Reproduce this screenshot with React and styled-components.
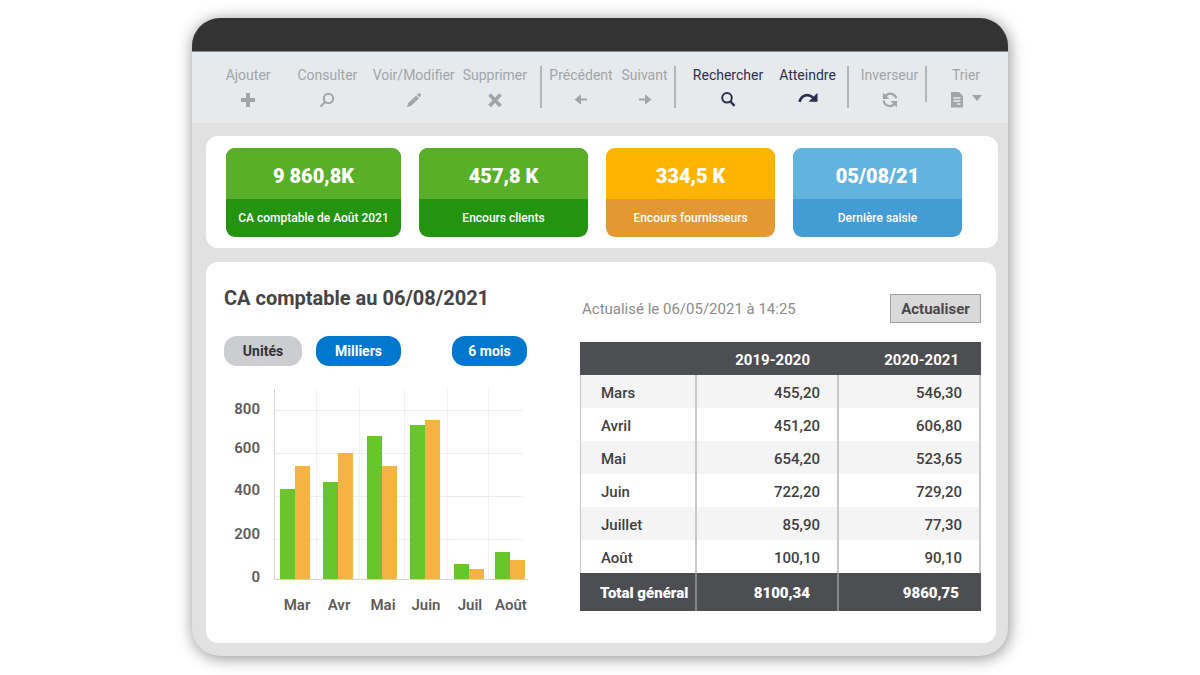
import React, { useState } from 'react'
import styled, { createGlobalStyle } from 'styled-components'

const kpis = [
    { value: '9 860,8K', label: 'CA comptable de Août 2021', top: '#5aaf28', bottom: '#229410' },
    { value: '457,8 K', label: 'Encours clients', top: '#5aaf28', bottom: '#229410' },
    { value: '334,5 K', label: 'Encours fournisseurs', top: '#ffb400', bottom: '#e49833' },
    { value: '05/08/21', label: 'Dernière saisie', top: '#62b4df', bottom: '#439cd4' },
]

const rows = [
    ['Mars', '455,20', '546,30'],
    ['Avril', '451,20', '606,80'],
    ['Mai', '654,20', '523,65'],
    ['Juin', '722,20', '729,20'],
    ['Juillet', '85,90', '77,30'],
    ['Août', '100,10', '90,10'],
]

// x is the left edge of the pair, green and orange are the bar heights
const bars = [
    { month: 'Mar', x: 56, green: 90, orange: 113, label: 73 },
    { month: 'Avr', x: 99, green: 97, orange: 126, label: 115 },
    { month: 'Mai', x: 143, green: 143, orange: 113, label: 159 },
    { month: 'Juin', x: 186, green: 154, orange: 159, label: 202 },
    { month: 'Juil', x: 230, green: 15, orange: 10, label: 246 },
    { month: 'Août', x: 271, green: 27, orange: 19, label: 287 },
]

const ticks = [
    { value: 800, y: 21 },
    { value: 600, y: 60 },
    { value: 400, y: 102 },
    { value: 200, y: 146 },
    { value: 0, y: 189 },
]

const PlusIcon = () => (
    <Icon viewBox="0 0 16 16"><path d="M6 1h4v5h5v4h-5v5H6v-5H1V6h5z" fill="currentColor" /></Icon>
)

const LoupeIcon = () => (
    <Icon viewBox="0 0 16 16">
        <circle cx="9.5" cy="6.5" r="4.7" fill="none" stroke="currentColor" strokeWidth="2" />
        <path d="M6 10l-4.5 4.5" stroke="currentColor" strokeWidth="2" />
    </Icon>
)

const PencilIcon = () => (
    <Icon viewBox="0 0 16 16">
        <path d="M1 15l1-3.8 8.2-7.6 2.8 2.8-8.2 7.6zM11 2.8l1.5-1.4c.4-.4 1-.4 1.4 0l.9.9c.4.4.4 1 0 1.4l-1.3 1.5z" fill="currentColor" />
    </Icon>
)

const CrossIcon = () => (
    <Icon viewBox="0 0 16 16"><path d="M2.5 2.5l11 11.5M13.5 2.5l-11 11.5" stroke="currentColor" strokeWidth="3.6" /></Icon>
)

const LeftIcon = () => (
    <Icon viewBox="0 0 16 16"><path d="M1.5 7.5L8 2.2v4.3h6v2H8v4.3z" fill="currentColor" /></Icon>
)

const RightIcon = () => (
    <Icon viewBox="0 0 16 16"><path d="M14.5 7.5L8 2.2v4.3H2v2h6v4.3z" fill="currentColor" /></Icon>
)

const SearchIcon = () => (
    <Icon viewBox="0 0 16 16">
        <circle cx="7" cy="5.8" r="4.8" fill="none" stroke="currentColor" strokeWidth="2" />
        <path d="M10.3 9.3l4.2 4.6" stroke="currentColor" strokeWidth="2.4" />
    </Icon>
)

const JumpIcon = () => (
    <Icon viewBox="0 0 20 16" $width={20}>
        <path d="M1.5 9.8C3.5 3.5 9.5 1 15 5.5" fill="none" stroke="currentColor" strokeWidth="2.6" />
        <path d="M19.5.8v9h-9z" fill="currentColor" />
    </Icon>
)

const SwapIcon = () => (
    <Icon viewBox="0 0 16 16">
        <path d="M14.3 6.2A6.2 6.2 0 0 0 3.5 4M1.7 8.5A6.2 6.2 0 0 0 12.5 12" fill="none" stroke="currentColor" strokeWidth="2.2" />
        <path d="M1 .5V7h6.5zM15 15.500V9H8.500z" fill="currentColor" />
    </Icon>
)

const SortIcon = () => (
    <Icon viewBox="0 0 32 16" $width={32}>
        <path d="M1 0h8l4 4v11.500H1z" fill="currentColor" />
        <path d="M3.500 6h7M3.500 9h7M7 12h3.500" stroke="#e6eaed" strokeWidth="1.300" />
        <path d="M22 3h10l-5 6z" fill="currentColor" />
    </Icon>
)

function Tool({ label, icon, active }) {
    return (
        <ToolButton type="button" $active={active}>
            {label}
            {icon}
        </ToolButton>
    )
}

function Chart() {
    return (
        <ChartSvg viewBox="0 0 306 230" role="img" aria-label="CA comptable par mois">
            {[92, 135, 180, 223, 264].map(x => (
                <line key={x} x1={x + .5} x2={x + .5} y1="1" y2="191" stroke="#f0f0f0" />
            ))}
            {[22, 65, 108, 151].map(y => (
                <line key={y} x1="50" x2="299" y1={y + .5} y2={y + .5} stroke="#eeeeee" />
            ))}
            <path d="M50.5 1v190.5H304" fill="none" stroke="#d2d2d2" />
            {bars.map(bar => (
                <g key={bar.month}>
                    <rect x={bar.x} y={191 - bar.green} width="15" height={bar.green} fill="#68c62c" />
                    <rect x={bar.x + 15} y={191 - bar.orange} width="15" height={bar.orange} fill="#f4b343" />
                    <text x={bar.label} y="222" textAnchor="middle">{bar.month}</text>
                </g>
            ))}
            {ticks.map(tick => (
                <text key={tick.value} x="36" y={tick.y + 5} textAnchor="end">{tick.value}</text>
            ))}
        </ChartSvg>
    )
}

function App() {

    const [unit, setUnit] = useState('Milliers')

    return (
        <Page>
            <GlobalStyle />
            <Window>
                <TitleBar />
                <Toolbar>
                    <ToolGroup $columns="80fr 78fr 94fr 68fr 11fr">
                        <Tool label="Ajouter" icon={<PlusIcon />} />
                        <Tool label="Consulter" icon={<LoupeIcon />} />
                        <Tool label="Voir/Modifier" icon={<PencilIcon />} />
                        <Tool label="Supprimer" icon={<CrossIcon />} />
                    </ToolGroup>
                    <ToolGroup $columns="68fr 59fr">
                        <Tool label="Précédent" icon={<LeftIcon />} />
                        <Tool label="Suivant" icon={<RightIcon />} />
                    </ToolGroup>
                    <ToolGroup $columns="94fr 65fr 7fr">
                        <Tool label="Rechercher" icon={<SearchIcon />} active />
                        <Tool label="Atteindre" icon={<JumpIcon />} active />
                    </ToolGroup>
                    <ToolGroup $columns="1fr">
                        <Tool label="Inverseur" icon={<SwapIcon />} />
                    </ToolGroup>
                    <ToolGroup $columns="1fr">
                        <Tool label="Trier" icon={<SortIcon />} />
                    </ToolGroup>
                </Toolbar>

                <Content>
                    <KpiPanel>
                        {kpis.map(kpi => (
                            <Kpi key={kpi.label} $color={kpi.bottom}>
                                <KpiValue $color={kpi.top}>{kpi.value}</KpiValue>
                                <KpiLabel>{kpi.label}</KpiLabel>
                            </Kpi>
                        ))}
                    </KpiPanel>

                    <ReportPanel>
                        <ChartSide>
                            <Title>CA comptable au 06/08/2021</Title>
                            <Filters>
                                <Pill type="button" $width={78} $on={unit === 'Unités'} onClick={() => setUnit('Unités')}>Unités</Pill>
                                <Pill type="button" $width={85} $on={unit === 'Milliers'} onClick={() => setUnit('Milliers')}>Milliers</Pill>
                                <PeriodPill type="button" $width={75} $on>6 mois</PeriodPill>
                            </Filters>
                            <Chart />
                        </ChartSide>

                        <TableSide>
                            <Refresh>
                                <span>Actualisé le 06/05/2021 à 14:25</span>
                                <RefreshButton type="button">Actualiser</RefreshButton>
                            </Refresh>
                            <Table>
                                <colgroup>
                                    <col width="117" />
                                    <col width="142" />
                                    <col width="142" />
                                </colgroup>
                                <thead>
                                    <tr>
                                        <th aria-label="Mois"></th>
                                        <th>2019-2020</th>
                                        <th>2020-2021</th>
                                    </tr>
                                </thead>
                                <tbody>
                                    {rows.map(row => (
                                        <tr key={row[0]}>
                                            <th>{row[0]}</th>
                                            <td>{row[1]}</td>
                                            <td>{row[2]}</td>
                                        </tr>
                                    ))}
                                </tbody>
                                <tfoot>
                                    <tr>
                                        <th>Total général</th>
                                        <td>8100,34</td>
                                        <td>9860,75</td>
                                    </tr>
                                </tfoot>
                            </Table>
                        </TableSide>
                    </ReportPanel>
                </Content>
            </Window>
        </Page>
    )
}

export default App

const GlobalStyle = createGlobalStyle`
    * {
        box-sizing: border-box;
    }

    body {
        margin: 0;
        background: white;
        font-family: Roboto, "Liberation Sans", sans-serif;
        font-size: 15px;
        color: #444;
    }

    button {
        border: 0;
        padding: 0;
        font: inherit;
        cursor: pointer;
    }
`

const Page = styled.div`
    padding: 18px 16%;
`

const Window = styled.main`
    background: #e1e1e1;
    border-radius: 28px;
    overflow: hidden;
    box-shadow: 1px 2px 16px rgba(0, 0, 0, 0.45);
`

const TitleBar = styled.header`
    height: 34px;
    background: #333;
    border-bottom: 1px solid #8b8d8e;
`

const Toolbar = styled.nav`
    display: grid;
    grid-template-columns: 334fr 134fr 173fr 78fr 73fr;
    align-items: start;
    height: 71px;
    padding: 14px 8px 0 16px;
    background: #e6eaed;
`

const ToolGroup = styled.div`
    display: grid;
    grid-template-columns: ${props => props.$columns};
    height: 42px;
    padding-left: 5px;
    border-right: 2px solid #b3b6b8;

    &:first-child {
        padding-left: 0;
    }

    &:nth-child(n + 4) {
        height: 36px;
    }

    &:last-child {
        border-right: 0;
    }
`

const ToolButton = styled.button`
    display: flex;
    flex-direction: column;
    align-items: center;
    gap: 8px;
    min-width: 0;
    height: 42px;
    background: none;
    font-size: 14px;
    line-height: 18px;
    white-space: nowrap;
    color: ${props => props.$active ? '#2b3050' : '#a2a5a8'};
`

const Icon = styled.svg`
    flex: none;
    width: ${props => props.$width || 16}px;
    height: 16px;
`

const Content = styled.div`
    display: flex;
    flex-direction: column;
    gap: 14px;
    padding: 13px 12px 13px 14px;
`

const Panel = styled.section`
    background: white;
    border-radius: 12px;
`

const KpiPanel = styled(Panel)`
    display: grid;
    grid-template-columns: 175fr 169fr 169fr 169fr;
    gap: 18px;
    margin-right: -2px;
    padding: 12px 36px 11px 20px;
`

const Kpi = styled.div`
    overflow: hidden;
    border-radius: 9px;
    background: ${props => props.$color};
    color: white;
    text-align: center;
`

const KpiValue = styled.div`
    padding-top: 6px;
    background: ${props => props.$color};
    font-size: 20px;
    font-weight: 900;
    line-height: 45px;
`

const KpiLabel = styled.div`
    font-size: 12px;
    font-weight: 500;
    line-height: 38px;
    white-space: nowrap;
`

const ReportPanel = styled(Panel)`
    display: grid;
    grid-template-columns: 306fr 401fr;
    gap: 50px;
    padding: 22px 15px 25px 18px;
`

const ChartSide = styled.div`
    min-width: 0;
`

const Title = styled.h1`
    margin: 0;
    font-size: 20px;
    font-weight: 700;
    line-height: 28px;
    white-space: nowrap;
`

const Filters = styled.div`
    display: flex;
    gap: 14px;
    margin: 24px 3px 22px 0;
`

const Pill = styled.button`
    width: ${props => props.$width}px;
    height: 30px;
    border-radius: 13px;
    background: ${props => props.$on ? '#0077cf' : '#cccdd1'};
    color: ${props => props.$on ? 'white' : '#333'};
    font-size: 14px;
    font-weight: 700;
`

const PeriodPill = styled(Pill)`
    margin-left: auto;
`

const ChartSvg = styled.svg`
    display: block;
    width: 100%;

    text {
        fill: #5c5c5e;
        font-size: 15px;
        font-weight: 600;
    }
`

const TableSide = styled.div`
    padding-top: 10px;
`

const Refresh = styled.div`
    display: flex;
    align-items: center;
    justify-content: space-between;
    margin-bottom: 19px;
    padding-left: 2px;
    color: #8c8c8c;
`

const RefreshButton = styled.button`
    width: 91px;
    height: 29px;
    border: 1px solid #a0a0a0;
    background: #d9d9d9;
    color: #4a4a4c;
    font-weight: 700;
`

const Table = styled.table`
    width: 100%;
    table-layout: fixed;
    border-collapse: separate;
    border-spacing: 0;
    color: #3f3f41;

    th, td {
        height: 33px;
        padding: 2px 17px 0 0;
        border-right: 2px solid #c8c8c8;
        font-weight: 500;
        text-align: right;
        white-space: nowrap;
    }

    th:first-child {
        padding: 2px 0 0 20px;
        text-align: left;
    }

    tbody th {
        border-left: 1px solid #c8c8c8;
    }

    tbody tr:nth-child(odd) {
        background: #f4f4f4;
    }

    thead, tfoot {
        background: #4d4e52;
        color: white;
    }

    thead th, tfoot th, tfoot td {
        padding-right: 27px;
        border-color: #4d4e52;
        font-weight: 700;
    }

    thead th:last-child, tfoot td:last-child {
        padding-right: 20px;
    }

    tfoot th, tfoot td {
        height: 38px;
        font-weight: 900;
    }

    tfoot th, tfoot td:nth-child(2) {
        border-color: #85868a;
    }
`
